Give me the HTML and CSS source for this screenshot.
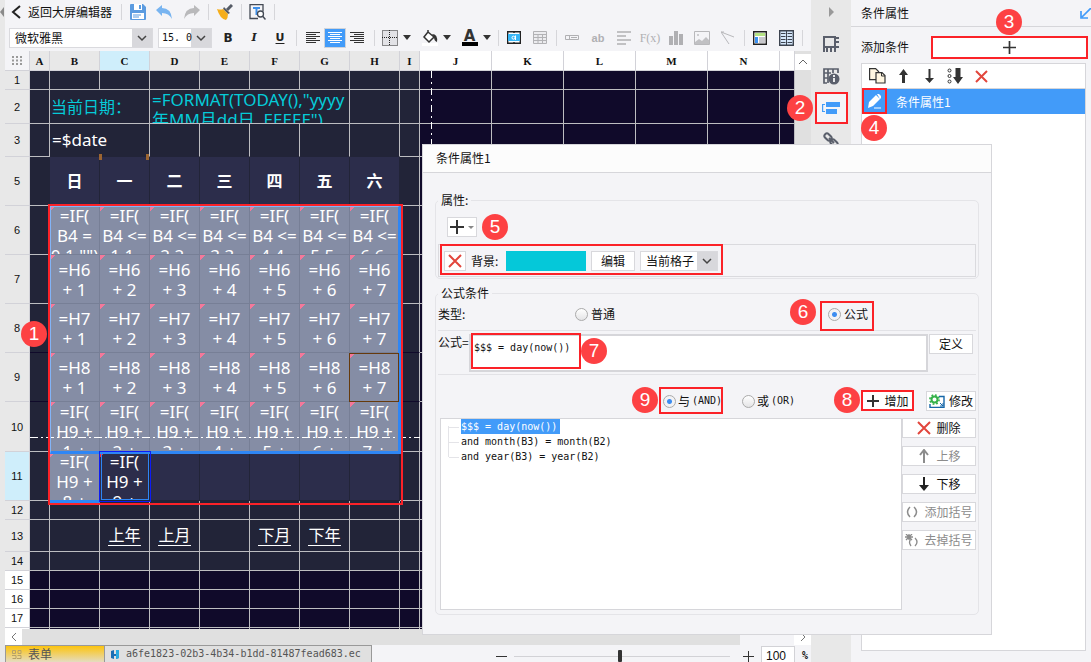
FILE: index.html
```html
<!DOCTYPE html>
<html lang="zh-CN">
<head>
<meta charset="utf-8">
<title>条件属性</title>
<link rel="stylesheet" href="styles.css">
</head>
<body>
<div class="app">
  <div class="edge"><svg class="edge-arrow" width="4" height="10" viewBox="0 0 4 10"><path d="M4 0v10L0 5z" fill="#8a8a8a"/></svg></div>
  <main class="main">
    <div class="bar bar-top">
      <button class="back"><svg width="10" height="14" viewBox="0 0 10 14"><path d="M9 1 2 7l7 6" fill="none" stroke="#222" stroke-width="2"/></svg>返回大屏编辑器</button>
      <i class="sep"></i>
      <div class="group wide">
        <button aria-label="保存"><svg width="16" height="16" viewBox="0 0 16 16"><path d="M0 1q0-1 1-1h12l3 3v12q0 1-1 1H1q-1 0-1-1z" fill="#5b9be0"/><path d="M4 0h8v6H4z" fill="#fff"/><path d="M9 1h2v4H9z" fill="#5b9be0"/><path d="M2 9h12v6H2z" fill="#fff"/><path d="M3 11h8M3 13h6" stroke="#5b9be0"/></svg></button>
        <button aria-label="撤销"><svg width="17" height="15" viewBox="0 0 17 15"><path d="M0 5 6 0v3q9 0 10 11-3-6-10-6v3z" fill="#78b4f0"/></svg></button>
        <button aria-label="重做"><svg width="17" height="15" viewBox="0 0 17 15"><path d="M17 5 11 0v3Q2 3 1 14q3-6 10-6v3z" fill="#b9b9bb"/></svg></button>
      </div>
      <i class="sep"></i>
      <div class="group wide"><button aria-label="格式刷"><svg width="16" height="16" viewBox="0 0 16 16"><path d="m15 1-5 5" stroke="#555b66" stroke-width="3"/><path d="m7 3 6 6-2 1-5-5z" fill="#555b66"/><path d="M0 5q4 1 6 0l5 5q0 4-2 6-6-1-9-11z" fill="#f5ae1c"/></svg></button></div>
      <i class="sep"></i>
      <div class="group wide"><button aria-label="预览"><svg width="17" height="16" viewBox="0 0 17 16"><path d="M9 14.500H1V.5h13v7" fill="none" stroke="#444a55" stroke-width="1.300"/><path d="M4 4h7M7.500 4v7" stroke="#3f8fe8" stroke-width="2"/><circle cx="11.500" cy="10" r="3" fill="#fff" stroke="#444a55" stroke-width="1.300"/><path d="m13.500 12 3 3.500" stroke="#444a55" stroke-width="1.500"/></svg></button></div>
      <i class="sep"></i>
    </div>
    <div class="bar bar-format">
      <select class="combo combo-font" aria-label="字体"><option>微软雅黑</option></select>
      <select class="combo combo-size mono" aria-label="字号"><option>15. 0</option></select>
      <div class="group"><button class="letter"><b>B</b></button><button class="letter"><em>I</em></button><button class="letter"><u>U</u></button></div>
      <i class="sep"></i>
      <div class="group aligns">
        <button aria-label="左对齐"><svg width="14" height="12" viewBox="0 0 14 12"><path d="M0 .5h14M0 2.500h10M0 4.500h14M0 6.500h10M0 8.500h14M0 10.500h10" stroke="#333"/></svg></button>
        <button class="active" aria-label="居中"><svg width="14" height="12" viewBox="0 0 14 12"><path d="M0 .5h14M2 2.500h10M0 4.500h14M2 6.500h10M0 8.500h14M2 10.500h10" stroke="#fff"/></svg></button>
        <button aria-label="右对齐"><svg width="14" height="12" viewBox="0 0 14 12"><path d="M0 .5h14M4 2.500h10M0 4.500h14M4 6.500h10M0 8.500h14M4 10.500h10" stroke="#333"/></svg></button>
      </div>
      <i class="sep"></i>
      <div class="drops">
        <button aria-label="边框"><svg width="16" height="16" viewBox="0 0 16 16"><path d="M.5.5h15v15H.5z" fill="#e2e2e6" stroke="#222" stroke-dasharray="1 1"/><path d="M0 7.500h16M7.500 0v16" stroke="#222" stroke-dasharray="1 1"/></svg><i class="caret"></i></button>
        <button aria-label="填充"><svg width="16" height="16" viewBox="0 0 16 16"><path d="M0 13h16v3H0z" fill="#fff"/><path d="m6 2 6 5-5 5-5-5 4-5V0" fill="#fff" stroke="#333" stroke-width="1.500"/><path d="M10 4q6 0 5 8-3-1-3-5z" fill="#333"/></svg><i class="caret"></i></button>
        <button aria-label="文字颜色"><span class="font-color">A</span><i class="caret"></i></button>
      </div>
      <i class="sep"></i>
      <div class="group">
        <button aria-label="合并"><svg width="14" height="13" viewBox="0 0 14 13"><path d="M.7.7h12.600v11.600H.7zM7 0v2M7 11v2" fill="#fff" stroke="#222" stroke-width="1.400"/><path d="M1 3h12v7H1z" fill="#38b6f5"/><circle cx="6.500" cy="6.700" r="1.500" fill="none" stroke="#fff"/><path d="M8.500 4.500V9" stroke="#fff"/></svg></button>
        <button aria-label="表格"><svg width="14" height="13" viewBox="0 0 14 13"><path d="M.5.500h13v12H.5zM0 3.500h14M0 6.500h14M0 9.500h14M5 3v10M9.500 3v10" fill="#ececef" stroke="#b2b2b5"/></svg></button>
      </div>
      <i class="sep"></i>
      <div class="group">
        <button aria-label="文本框"><svg width="14" height="5" viewBox="0 0 14 5"><path d="M.5.500h13v4H.5zM4.500 0v5M6 2.500h6" fill="none" stroke="#b0b0b3"/></svg></button>
        <button class="faint">ab</button>
        <button aria-label="富文本"><svg width="14" height="14" viewBox="0 0 14 14"><path d="M0 1h14M0 5h9M0 9h14M0 13h9" stroke="#b0b0b3" stroke-width="1.600"/></svg></button>
        <button class="faint serif">F(x)</button>
        <button aria-label="图表"><svg width="14" height="14" viewBox="0 0 14 14"><path d="M0 5h4v9H0zM5 0h4v14H5zM10 3h4v11h-4z" fill="#b0b0b3"/></svg></button>
        <button aria-label="图片"><svg width="16" height="14" viewBox="0 0 16 14"><path d="M.5.500h15v13H.5z" fill="none" stroke="#b8b8bb"/><path d="m1 11 4-3 3 2 4-4 3 3v4H1z" fill="#c0c0c3"/><circle cx="4" cy="4" r="1" fill="#c0c0c3"/></svg></button>
        <button aria-label="斜线"><svg width="14" height="14" viewBox="0 0 14 14"><path d="M0 1l13 5M0 1l8 12M0 1h3" fill="none" stroke="#b8b8bb"/></svg></button>
      </div>
      <i class="sep"></i>
      <div class="group">
        <button aria-label="布局"><svg width="14" height="14" viewBox="0 0 14 14"><path d="M.7.700h12.600v12.600H.7z" fill="#fff" stroke="#222" stroke-width="1.400"/><path d="M2 2h10v3H2z" fill="#b5e384"/><path d="M2 6h3v6H2z" fill="#3c92f2"/><path d="M6 6h6v6H6z" fill="#c8c8cc"/></svg></button>
        <button aria-label="分栏"><svg width="15" height="16" viewBox="0 0 15 16"><path d="M.7.700h13.600v14.600H.7z" fill="#d4e6fa" stroke="#3c434f" stroke-width="1.400"/><path d="M2 3.500h4.500M2 6.500h4.500M2 9.500h4.500M2 12.500h4.500M8.500 3.500H13M8.500 6.500H13M8.500 9.500H13M8.500 12.500H13M7.500 1v14" stroke="#3c434f"/></svg></button>
      </div>
      <i class="sep"></i>
    </div>

    <div class="work">
      <div class="sheet">
        <table class="grid">
          <colgroup><col class="c-head"><col class="c-thin"><col class="c-cell" span="7"><col class="c-thin"><col class="c-out" span="5"><col class="c-rest"></colgroup>
          <tr class="heads"><th class="corner"><svg width="11" height="9" viewBox="0 0 11 9"><path d="M1 0v9M5 0v9M9 0v9" stroke="#999" stroke-width="2" stroke-dasharray="2 1.500"/></svg></th><th>A</th><th>B</th><th class="hot">C</th><th>D</th><th>E</th><th>F</th><th>G</th><th>H</th><th>I</th><th class="blank">J</th><th class="blank">K</th><th class="blank">L</th><th class="blank">M</th><th class="blank">N</th><th class="blank"></th></tr>
          <tr class="r19"><th>1</th><td></td><td></td><td></td><td></td><td></td><td></td><td></td><td></td><td></td><td></td><td></td><td></td><td></td><td></td><td></td></tr>
          <tr class="r34"><th>2</th><td></td><td colspan="2" class="teal label">当前日期：</td><td colspan="4" class="teal top"><div class="clip">=FORMAT(TODAY(),"yyyy<br>年MM月dd日&nbsp; EEEEE")</div></td><td></td><td></td><td></td><td></td><td></td><td></td><td></td><td></td></tr>
          <tr class="r33"><th>3</th><td></td><td colspan="2" class="open">=$date</td><td class="open"></td><td class="open"></td><td class="open"></td><td class="open"></td><td class="open"></td><td></td><td></td><td></td><td></td><td></td><td></td><td></td></tr>
          <tr class="r49 band"><th>5</th><td></td><td>日</td><td>一</td><td>二</td><td>三</td><td>四</td><td>五</td><td>六</td><td></td><td colspan="6"></td></tr>
          <tr class="r49 picked over"><th>6</th><td></td><td><div class="cell">=IF(<br>B4 =<br>0,1,"")</div></td><td><div class="cell">=IF(<br>B4 &lt;=<br>1,1,</div></td><td><div class="cell">=IF(<br>B4 &lt;=<br>2,2,</div></td><td><div class="cell">=IF(<br>B4 &lt;=<br>3,3,</div></td><td><div class="cell">=IF(<br>B4 &lt;=<br>4,4,</div></td><td><div class="cell">=IF(<br>B4 &lt;=<br>5,5,</div></td><td><div class="cell">=IF(<br>B4 &lt;=<br>6,6,</div></td><td></td><td colspan="6"></td></tr>
          <tr class="r49 picked mid"><th>7</th><td></td><td><div class="cell">=H6<br>+ 1</div></td><td><div class="cell">=H6<br>+ 2</div></td><td><div class="cell">=H6<br>+ 3</div></td><td><div class="cell">=H6<br>+ 4</div></td><td><div class="cell">=H6<br>+ 5</div></td><td><div class="cell">=H6<br>+ 6</div></td><td><div class="cell">=H6<br>+ 7</div></td><td></td><td colspan="6"></td></tr>
          <tr class="r49 picked mid deep"><th>8</th><td></td><td><div class="cell">=H7<br>+ 1</div></td><td><div class="cell">=H7<br>+ 2</div></td><td><div class="cell">=H7<br>+ 3</div></td><td><div class="cell">=H7<br>+ 4</div></td><td><div class="cell">=H7<br>+ 5</div></td><td><div class="cell">=H7<br>+ 6</div></td><td><div class="cell">=H7<br>+ 7</div></td><td></td><td colspan="6"></td></tr>
          <tr class="r49 picked mid deep"><th>9</th><td></td><td><div class="cell">=H8<br>+ 1</div></td><td><div class="cell">=H8<br>+ 2</div></td><td><div class="cell">=H8<br>+ 3</div></td><td><div class="cell">=H8<br>+ 4</div></td><td><div class="cell">=H8<br>+ 5</div></td><td><div class="cell">=H8<br>+ 6</div></td><td><div class="cell">=H8<br>+ 7</div></td><td></td><td colspan="6"></td></tr>
          <tr class="r50 picked over"><th>10</th><td></td><td><div class="cell">=IF(<br>H9 +<br>1 +</div></td><td><div class="cell">=IF(<br>H9 +<br>2 +</div></td><td><div class="cell">=IF(<br>H9 +<br>3 +</div></td><td><div class="cell">=IF(<br>H9 +<br>4 +</div></td><td><div class="cell">=IF(<br>H9 +<br>5 +</div></td><td><div class="cell">=IF(<br>H9 +<br>6 +</div></td><td><div class="cell">=IF(<br>H9 +<br>7 +</div></td><td></td><td colspan="6"></td></tr>
          <tr class="r49 band"><th class="hot">11</th><td></td><td class="on"><div class="cell">=IF(<br>H9 +<br>8 +</div></td><td><div class="cell current">=IF(<br>H9 +<br>9 +</div></td><td></td><td></td><td></td><td></td><td></td><td></td><td colspan="6"></td></tr>
          <tr class="r19"><th>12</th><td></td><td></td><td></td><td></td><td></td><td></td><td></td><td></td><td></td><td colspan="6"></td></tr>
          <tr class="r32"><th>13</th><td></td><td></td><td><a href="#">上年</a></td><td><a href="#">上月</a></td><td></td><td><a href="#">下月</a></td><td><a href="#">下年</a></td><td></td><td></td><td colspan="6"></td></tr>
          <tr class="r19"><th>14</th><td></td><td></td><td></td><td></td><td></td><td></td><td></td><td></td><td></td><td colspan="6"></td></tr>
          <tr class="r19 outside"><th>15</th><td></td><td></td><td></td><td></td><td></td><td></td><td></td><td></td><td></td><td colspan="6"></td></tr>
          <tr class="r19 outside"><th>16</th><td></td><td></td><td></td><td></td><td></td><td></td><td></td><td></td><td></td><td colspan="6"></td></tr>
          <tr class="r19 outside"><th>17</th><td></td><td></td><td></td><td></td><td></td><td></td><td></td><td></td><td></td><td colspan="6"></td></tr>
          <tr class="r19 outside"><th></th><td></td><td></td><td></td><td></td><td></td><td></td><td></td><td></td><td></td><td colspan="6"></td></tr>
        </table>
        <i class="page-x"></i><i class="page-y"></i>
        <i class="tick tick-a"></i><i class="tick tick-b"></i>
        <i class="range"></i><i class="range-tail"></i><i class="cursor"></i><i class="parent-cell"></i>
        <i class="mark m1"></i><span class="badge b1">1</span>
      </div>
      <div class="vscroll"><button aria-label="向上"><svg width="10" height="6" viewBox="0 0 10 6"><path d="m1 5 4-4 4 4" fill="none" stroke="#666"/></svg></button></div>
    </div>
    <div class="hscroll">
      <button aria-label="向左"><svg width="6" height="10" viewBox="0 0 6 10"><path d="M5 1 1 5l4 4" fill="none" stroke="#777"/></svg></button>
      <i class="thumb"></i>
      <button aria-label="向右"><svg width="6" height="10" viewBox="0 0 6 10"><path d="m1 1 4 4-4 4" fill="none" stroke="#777"/></svg></button>
    </div>
    <div class="status">
      <button class="tab tab-form"><svg width="10" height="9" viewBox="0 0 10 9"><path d="M.5.500h3v3h-3zM6 .5h3v3H6zM0 5.500h4v3H.5M5.500 5.500H9v3H5" fill="none" stroke="#b5a16a"/></svg>表单</button>
      <button class="tab tab-block mono"><svg width="8" height="9" viewBox="0 0 8 9"><path d="M0 1l3-1v4h2V0h3v8L5 9V6H3v3L0 8z" fill="#1b6fb5"/><path d="M5 0h3v8L5 9z" fill="#28a9e0"/></svg>a6fe1823-02b3-4b34-b1dd-81487fead683.ec</button>
      <div class="zoom">
        <button aria-label="缩小"><svg width="11" height="11" viewBox="0 0 11 11"><path d="M0 5.500h11" stroke="#333"/></svg></button>
        <input type="range" min="0" max="100" value="49" aria-label="缩放">
        <button aria-label="放大"><svg width="11" height="11" viewBox="0 0 11 11"><path d="M0 5.500h11M5.500 0v11" stroke="#333"/></svg></button>
        <input class="pct" type="text" value="100" aria-label="缩放比例"><b class="mono">%</b>
      </div>
    </div>
  </main>

  <nav class="side">
    <button aria-label="收起"><svg width="5" height="10" viewBox="0 0 5 10"><path d="M0 0v10l5-5z" fill="#999"/></svg></button>
    <button aria-label="单元格元素"><svg width="17" height="17" viewBox="0 0 17 17"><path d="M1 16V1h11v10H1M12 2h4M12 6h4M12 11h4M4 11v5M8 11v5M12 11v5" fill="none" stroke="#5a5f6b" stroke-width="2"/></svg></button>
    <button aria-label="单元格属性"><svg width="17" height="17" viewBox="0 0 17 17"><path d="M4 15H1V1h14v4M1 5h7M1 10h4M5 1v14M10 1v4" fill="none" stroke="#5a5f6b" stroke-width="1.700"/><circle cx="11" cy="11" r="5.500" fill="#5a5f6b"/><path d="M11 7v2M11 10v4" stroke="#fff" stroke-width="1.700"/></svg></button>
    <button class="current-tool" aria-label="条件属性"><svg width="18" height="14" viewBox="0 0 18 14"><path d="M4 1h14v5H4zM4 8h11v5H4z" fill="#429bf9"/><path d="M3 3.500H.6v7H3" fill="none" stroke="#429bf9" stroke-width="1.200"/></svg></button>
    <button aria-label="超链接"><svg width="17" height="17" viewBox="0 0 17 17"><g fill="none" stroke="#5a5f6b" stroke-width="2"><rect x="-4" y="-2.500" width="8" height="5" rx="2.500" transform="translate(5 5) rotate(45)"/><rect x="-4" y="-2.500" width="8" height="5" rx="2.500" transform="translate(11 11) rotate(45)"/><path d="m6 6 5 5"/></g></svg></button>
    <span class="badge b2">2</span>
  </nav>

  <aside class="panel">
    <header class="panel-title">条件属性<svg width="11" height="11" viewBox="0 0 11 11"><path d="M11 0 2 9M1 3v7h7" fill="none" stroke="#429bf9" stroke-width="1.700"/></svg></header>
    <div class="add-row"><span>添加条件</span><button class="add" aria-label="添加条件"><svg width="13" height="13" viewBox="0 0 13 13"><path d="M0 6.500h13M6.500 0v13" stroke="#333" stroke-width="1.700"/></svg></button></div>
    <div class="cond-list">
      <div class="cond-tools">
        <button aria-label="复制"><svg width="17" height="16" viewBox="0 0 17 16"><path d="M.6.600h6l3 3v8h-9z" fill="#fff6e0" stroke="#333" stroke-width="1.200"/><path d="M7 4.600h6l3 3V15H7z" fill="#fff6e0" stroke="#333" stroke-width="1.200"/><path d="M12.500 5v3H16" fill="none" stroke="#333"/></svg></button>
        <button aria-label="上移"><svg width="11" height="15" viewBox="0 0 11 15"><path d="M5.500 0 1 6h3v8h3V6h3z" fill="#333"/></svg></button>
        <button aria-label="下移"><svg width="11" height="15" viewBox="0 0 11 15"><path d="M5.500 14 1 9h3.500V0h2v9H10z" fill="#333"/></svg></button>
        <button aria-label="置底"><svg width="16" height="16" viewBox="0 0 16 16"><circle cx="2.500" cy="2.500" r="1.500" fill="none" stroke="#333"/><circle cx="2.500" cy="8" r="1.500" fill="none" stroke="#333"/><circle cx="2.500" cy="13.500" r="1.500" fill="none" stroke="#333"/><path d="M8.500 0h5v9H16l-5 7-5-7h2.500z" fill="#333"/></svg></button>
        <button aria-label="删除"><svg width="13" height="13" viewBox="0 0 13 13"><path d="m1 1 11 11M12 1 1 12" stroke="#e2463c" stroke-width="2"/></svg></button>
      </div>
      <div class="cond-item"><button aria-label="编辑"><svg width="15" height="15" viewBox="0 0 15 15"><path d="m2 8 7-7 4 4-7 7-5 2zM10 0h2l2 2v2l-1 1z" fill="#fff"/><path d="M7 14h7" stroke="#fff"/></svg></button>条件属性1</div>
    </div>
    <i class="mark m3"></i><span class="badge b3">3</span>
    <i class="mark m4"></i><span class="badge b4">4</span>
  </aside>

  <section class="dialog" role="dialog" aria-label="条件属性1">
    <header class="dialog-title">条件属性1</header>
    <div class="dialog-body">
      <fieldset>
        <legend>属性:</legend>
        <button class="btn add-prop" aria-label="添加属性"><svg width="14" height="14" viewBox="0 0 14 14"><path d="M0 7h14M7 0v14" stroke="#333" stroke-width="2"/></svg><i class="caret small"></i></button>
        <div class="prop">
          <button class="btn icon-only" aria-label="删除属性"><svg width="14" height="14" viewBox="0 0 14 14"><path d="m1 1 12 12M13 1 1 13" stroke="#e2463c" stroke-width="2"/></svg></button>
          <span class="prop-name">背景:</span>
          <i class="swatch"></i>
          <button class="btn edit">编辑</button>
          <select class="combo combo-scope" aria-label="范围"><option>当前格子</option></select>
        </div>
      </fieldset>
      <fieldset class="second">
        <legend>公式条件</legend>
        <div class="kind"><span>类型:</span><label><input type="radio" name="kind">普通</label><label><input type="radio" name="kind" checked>公式</label></div>
        <div class="formula"><label for="fx">公式=</label><textarea id="fx" class="mono" spellcheck="false">$$$ = day(now())</textarea><button class="btn define">定义</button></div>
        <div class="joins"><label><input type="radio" name="join" checked>与<span class="mono">(AND)</span></label><label><input type="radio" name="join">或<span class="mono">(OR)</span></label>
          <button class="btn insert"><svg width="12" height="12" viewBox="0 0 12 12"><path d="M0 6h12M6 0v12" stroke="#333" stroke-width="2"/></svg>增加</button>
          <button class="btn modify"><svg width="16" height="14" viewBox="0 0 16 14"><path d="M10 2.500h5v11H1V10" fill="none" stroke="#1767a8" stroke-width="1.400"/><path d="m11 9 3 3M11 12h3V9" stroke="#1767a8" fill="none"/><circle cx="5.500" cy="5.500" r="3" fill="none" stroke="#35b24a" stroke-width="2"/><circle cx="5.500" cy="5.500" r="4.600" fill="none" stroke="#35b24a" stroke-width="1.600" stroke-dasharray="1.800 1.800"/></svg>修改</button></div>
        <div class="lists">
          <ul class="tree mono"><li class="chosen"><span>$$$ = day(now())</span></li><li><span>and month(B3) = month(B2)</span></li><li><span>and year(B3) = year(B2)</span></li></ul>
          <div class="ops">
            <button class="btn"><svg width="14" height="14" viewBox="0 0 14 14"><path d="m1 1 12 12M13 1 1 13" stroke="#e2463c" stroke-width="2"/></svg>删除</button>
            <button class="btn" disabled><svg width="14" height="14" viewBox="0 0 14 14"><path d="M7 14V2M3 6l4-5 4 5" fill="none" stroke="#8c8c8c" stroke-width="2"/></svg>上移</button>
            <button class="btn"><svg width="14" height="14" viewBox="0 0 14 14"><path d="M7 0v12" stroke="#222" stroke-width="2"/><path d="M2 8h10l-5 6z" fill="#222"/></svg>下移</button>
            <button class="btn" disabled><svg width="14" height="12" viewBox="0 0 14 12"><path d="M5 1Q0 6 5 11M9 1q5 5 0 10" fill="none" stroke="#8c8c8c" stroke-width="1.500"/></svg>添加括号</button>
            <button class="btn" disabled><svg width="14" height="13" viewBox="0 0 14 13"><path d="M6 5Q3 8 6 12M10 4q4 4 0 8M0 3h8M4 0v6M1 0l6 6M7 0 1 6" fill="none" stroke="#8c8c8c" stroke-width="1.300"/></svg>去掉括号</button>
          </div>
        </div>
      </fieldset>
    </div>
    <i class="mark m5"></i><span class="badge b5">5</span>
    <i class="mark m6"></i><span class="badge b6">6</span>
    <i class="mark m7"></i><span class="badge b7">7</span>
    <i class="mark m8"></i><span class="badge b8">8</span>
    <i class="mark m9"></i><span class="badge b9">9</span>
  </section>
</div>
</body>
</html>
```

FILE: styles.css
```css
* { box-sizing: border-box; }
body { margin: 0; font: 12px/16px "Noto Sans CJK SC", sans-serif; color: #111; background: #f4f4f7; }
button, input, select, textarea { font: inherit; color: inherit; margin: 0; padding: 0; border: 0; background: none; border-radius: 0; outline: 0; }
button { display: inline-flex; align-items: center; justify-content: center; white-space: nowrap; }
svg { display: block; flex: none; }
.mono { font-family: "DejaVu Sans Mono", "Noto Sans CJK SC", monospace; font-size: 10px; }

.app { position: relative; display: flex; height: 100vh; overflow: hidden; }
.edge { flex: none; width: 5px; padding-top: 7px; background: #e8e8e8; }
.main { flex: 1; min-width: 0; display: flex; flex-direction: column; }

/* Toolbars */
.bar { flex: none; display: flex; align-items: center; }
.bar-top { height: 24px; padding-left: 6px; }
.bar-format { height: 27px; padding-left: 4px; }
.back { gap: 7px; padding-right: 7px; }
.sep { flex: none; width: 4px; height: 16px; background: linear-gradient(#d6d6da, #d6d6da) center / 1px 100% no-repeat; }
.group { display: flex; padding: 0 1px; }
.group button { width: 26px; height: 20px; }
.group.wide button { width: 27px; }
.group.aligns { padding: 0 4px; }
.group.aligns button { width: 22px; }
.group .active { background: #429bf9; border: 1px solid #cfd3da; }
.letter { font-family: "DejaVu Sans", sans-serif; font-size: 12px; color: #222; }
.letter em { font-family: "DejaVu Serif", serif; font-weight: bold; font-size: 11px; }
.letter u { font-weight: bold; font-size: 11px; text-underline-offset: 2px; }
.group .faint { color: #b0b0b3; font: bold 11px/14px "Liberation Sans", sans-serif; }
.group .serif { font: 12px/14px "Liberation Serif", serif; }
.drops { display: flex; }
.drops button { width: 40px; height: 20px; gap: 5px; }
.caret { width: 0; height: 0; border: 4px solid transparent; border-top: 5px solid #333; border-bottom: 0; }
.caret.small { border-width: 3px 3px 0; border-top-color: #888; }
.font-color { width: 16px; height: 16px; font: bold 15px/12px "DejaVu Sans", sans-serif; color: #333; border-bottom: 4px solid #000; }
.combo { height: 20px; border: 1px solid #dadade; appearance: none; padding: 0 5px; color: #111;
  background: url("data:image/svg+xml,%3Csvg xmlns='http://www.w3.org/2000/svg' width='20' height='20'%3E%3Cpath d='M0 0h20v20H0z' fill='%23d8d8dc'/%3E%3Cpath d='m6 8 4 4 4-4' fill='none' stroke='%23444' stroke-width='1.500'/%3E%3C/svg%3E") right center no-repeat #fff; }
.combo-font { width: 144px; margin-right: 5px; }
.combo-size { width: 54px; margin-right: 2px; padding: 0 0 0 3px; }
.combo-scope { width: 78px; }

/* Sheet */
.work { flex: 1; min-height: 0; display: flex; }
.sheet { position: relative; flex: 1; min-width: 0; overflow: hidden; background: #100a2a; }
.grid { width: 100%; table-layout: fixed; border-collapse: separate; border-spacing: 0; color: #fff; font: 17px/20px "Noto Sans", "Noto Sans CJK SC", sans-serif; }
.c-head { width: 25px; }
.c-thin { width: 20px; background: #222438; }
.c-cell { width: 50px; background: #222438; }
.c-out { width: 72px; background: #100a2a; }
.c-rest { background: #100a2a; }
.grid th { padding: 0; background: #e8e8e8; color: #111; font: 11px/14px "Liberation Sans", sans-serif; border-right: 1px solid #d2d2d8; border-bottom: 1px solid #d2d2d8; }
.grid .heads th { height: 20px; font: bold 11px/14px "Liberation Serif", serif; }
.grid .hot { background: #cfeefb; }
.grid .blank, .grid .outside th { background: #fff; }
.grid .corner { background: #f4f4f7; }
.corner svg { margin: 0 auto; }
.grid td { padding: 0; border-right: 1px solid #bdbdc1; border-bottom: 1px solid #bdbdc1; overflow: hidden; }
.r19 { height: 19px; }
.r32 { height: 32px; }
.r33 { height: 33px; }
.r34 { height: 34px; }
.r49 { height: 49px; }
.r50 { height: 50px; }
.outside { background: #100a2a; }
.grid .teal { color: #05cbd8; padding-left: 2px; white-space: nowrap; }
.grid .label { font-size: 16px; padding-left: 1px; }
.grid .top, .over td { vertical-align: top; }
.clip { height: 33px; overflow: hidden; }
.grid .open { border-bottom-color: #222438; padding-left: 2px; }
.band td, .picked td { text-align: center; }
.band td { font-size: 16px; }
.band td:nth-child(n+3):nth-child(-n+9) { background: #2c2d4b; border-color: #222438; font-weight: bold; }
.band td:nth-child(2), .picked td:nth-child(2) { border-right-color: #222438; }
.picked td:nth-child(n+3):nth-child(-n+9), .grid .band .on.on.on { background: #858da5; border-color: #777f96; font-weight: normal; }
.grid .deep td:nth-child(2), .grid .deep td:nth-child(10) { border-bottom-color: #100a2a; }
.cell { height: 48px; overflow: hidden; color: #fff; font-size: 17px; font-weight: normal; background: linear-gradient(135deg, #f4789a 4px, transparent 4px) no-repeat; }
.cell.current { background-image: linear-gradient(135deg, #ff2030 4px, transparent 4px); }
.mid .cell { padding-top: 5px; }
.r32 td { text-align: center; }
.r32 a { display: inline-block; height: 21px; color: #fff; font-size: 16px; text-decoration: none; border-bottom: 1px solid #fff; vertical-align: middle; }

.sheet > i { position: absolute; }
.page-x { left: 426px; top: 20px; bottom: 0; width: 1px; background: repeating-linear-gradient(#fff 0 7px, transparent 7px 11px, #fff 11px 13px, transparent 13px 17px); }
.page-y { left: 25px; top: 386px; width: 390px; height: 1px; background: repeating-linear-gradient(90deg, #fff 0 8px, transparent 8px 11px, #fff 11px 13px, transparent 13px 16px); }
.tick { top: 103px; width: 3px; height: 6px; background: #9c6531; }
.tick-a { left: 94px; }
.tick-b { left: 141px; }
.range { left: 45px; top: 154px; width: 351px; height: 249px; border: solid #2e86f5; border-width: 2px 3px 3px 1px; border-top-color: #82b4f7; border-left-color: #82b4f7; }
.range-tail { left: 45px; top: 449px; width: 50px; height: 3px; background: #2e86f5; }
.cursor { left: 94px; top: 400px; width: 52px; height: 51px; border: 1px solid #0d1cf5; outline: 1px solid #2e86f5; outline-offset: -3px; }
.parent-cell { left: 344px; top: 302px; width: 50px; height: 49px; border: 1px solid #663a0c; }

.vscroll { flex: none; width: 16px; padding-top: 1px; background: #e0e0e0; }
.vscroll button { width: 16px; height: 16px; background: #fff; }
.hscroll { flex: none; display: flex; height: 16px; background: #f4f4f7; }
.hscroll button { width: 17px; background: #fff; }
.hscroll .thumb { flex: 1; margin-right: 54px; background: #e0e0e0; }
.status { flex: none; display: flex; height: 17px; }
.tab { gap: 6px; justify-content: flex-start; height: 17px; border: 1px solid #999; border-bottom: 0; color: #555; padding-left: 6px; }
.tab-form { width: 100px; background: linear-gradient(#fcc40e, #e4dcc0); }
.tab-block { width: 267px; gap: 7px; border-left: 0; background: #e0e0e0; }
.zoom { flex: 1; display: flex; align-items: center; justify-content: flex-end; height: 22px; gap: 7px; padding-right: 3px; }
.zoom input[type="range"] { appearance: none; width: 216px; height: 12px; margin-right: 6px; background: linear-gradient(#d2d2d6, #d2d2d6) center / 100% 1px no-repeat; }
.zoom input[type="range"]::-webkit-slider-thumb { appearance: none; width: 4px; height: 12px; border-radius: 1px; background: #333; }
.zoom .pct { width: 34px; height: 20px; padding-left: 4px; border: 1px solid #d2d2d6; background: #fff; font: 12px/18px "Liberation Sans", sans-serif; }

/* Tool strip */
.side { position: relative; z-index: 2; flex: none; width: 40px; display: flex; flex-direction: column; align-items: center; background: #e8e8e8; }
.side button { flex: none; width: 33px; height: 32px; }
.side button:first-of-type { height: 24px; margin-bottom: 4px; }
.side .current-tool { background: #f4f4f7; border: 2px solid #fb2228; }

/* Right panel */
.panel { position: relative; flex: none; width: 240px; display: flex; flex-direction: column; padding-bottom: 11px; background: #f4f4f7; }
.panel-title { display: flex; align-items: center; justify-content: space-between; height: 27px; padding-left: 10px; border-bottom: 1px solid #d6d6da; }
.add-row { display: flex; align-items: center; justify-content: space-between; height: 36px; padding: 4px 5px 0 10px; }
.add { width: 154px; height: 20px; background: #fff; }
.cond-list { flex: 1; margin: 0 5px 0 10px; border: 1px solid #d6d6da; background: #fff; }
.cond-tools { display: flex; align-items: center; height: 25px; padding-left: 2px; border-bottom: 1px solid #d6d6da; }
.cond-tools button { width: 26px; height: 22px; }
.cond-item { display: flex; align-items: center; gap: 10px; height: 25px; color: #fff; background: #429bf9; }
.cond-item button { width: 24px; height: 25px; }

/* Dialog window */
.dialog { position: absolute; z-index: 3; left: 422px; top: 144px; width: 570px; background: #f4f4f7; border: 1px solid #d6d6da; }
.dialog-title { height: 28px; padding: 5px 13px; background: #fcfcfc; border-bottom: 1px solid #d6d6da; }
.dialog-body { padding: 19px 12px; }
fieldset { min-width: 0; margin: 0; padding: 9px 2px 1px; border: 1px solid #e4e4e8; border-radius: 5px; }
legend { padding: 0 3px; line-height: 16px; }
fieldset.second { margin-top: 6px; padding: 0 2px 4px; }
.btn { height: 20px; gap: 5px; background: #fff; border: 1px solid #d8d8dc; }
.btn:disabled { color: #8c8c8c; }
.add-prop { display: flex; gap: 4px; width: 30px; margin-left: 9px; }
.prop { display: flex; align-items: center; height: 33px; margin-top: 7px; padding-left: 5px; border: 1px solid #dadade; }
.icon-only { width: 22px; margin-right: 5px; }
.prop-name { width: 35px; }
.swatch { width: 80px; height: 20px; margin-right: 5px; background: #05c8d9; }
.edit { width: 44px; margin-right: 5px; }
label { display: inline-flex; align-items: center; gap: 3px; white-space: nowrap; }
input[type="radio"] { appearance: none; width: 13px; height: 13px; border: 1px solid #aaa; border-radius: 50%; background: linear-gradient(#fff, #e4e4e6); }
input[type="radio"]:checked { background: radial-gradient(circle, #3c8cf0 2px, #f2f2f4 3px); }
.kind { display: grid; grid-template-columns: 137px 253px auto; align-items: center; height: 30px; padding-bottom: 3px; border-bottom: 1px solid #e2e2e6; }
.formula { display: flex; align-items: flex-start; height: 44px; padding-top: 3px; border-bottom: 1px solid #e2e2e6; }
.formula label { width: 31px; }
.formula textarea { flex: 1; height: 38px; padding: 4px 3px; border: 2px solid #d6d6da; background: #fff; resize: none; line-height: 16px; overflow: hidden; }
.define { width: 44px; margin: 0 3px 0 1px; }
.joins { display: flex; align-items: center; height: 43px; padding-top: 9px; padding-left: 225px; }
.joins label { width: 79px; gap: 2px; }
.insert { width: 52px; margin-left: auto; }
.modify { width: 50px; margin-left: 12px; gap: 4px; }
.lists { display: flex; padding-left: 2px; }
.tree { flex: 1; height: 192px; margin: 0; padding: 0 0 0 7px; list-style: none; background: #fff; border: 1px solid #d6d6da; line-height: 15px; }
.tree li { display: flex; height: 15px; white-space: pre; border-left: 1px solid #e4e4e8; }
.tree li::before { content: ""; width: 10px; height: 8px; margin-right: 2px; border-bottom: 1px solid #e4e4e8; }
.tree li:last-child { border-image: linear-gradient(#e4e4e8 8px, transparent 8px) 1; }
.tree li:first-child { border-image: linear-gradient(transparent 7px, #e4e4e8 7px) 1; }
.tree .chosen span { padding-right: 3px; color: #fff; background: #429bf9; }
.ops { display: flex; flex-direction: column; gap: 8px; width: 74px; }

/* Step annotations */
.mark { position: absolute; z-index: 2; border: 2px solid #fb2228; }
.badge { position: absolute; z-index: 3; width: 26px; height: 26px; border-radius: 50%; background: #fd4143; color: #fff; text-align: center; font: 19px/26px "Liberation Sans", sans-serif; }
.m1 { left: 43px; top: 153px; width: 355px; height: 301px; }
.b1 { left: 16px; top: 270px; }
.b2 { left: -24px; top: 95px; }
.m3 { left: 80px; top: 36px; width: 157px; height: 23px; }
.b3 { left: 145px; top: 9px; }
.m4 { left: 11px; top: 88px; width: 25px; height: 26px; }
.b4 { left: 10px; top: 115px; }
.m5 { left: 17px; top: 99px; width: 283px; height: 31px; }
.b5 { left: 59px; top: 69px; }
.m6 { left: 397px; top: 156px; width: 54px; height: 30px; }
.b6 { left: 367px; top: 154px; }
.m7 { left: 48px; top: 188px; width: 110px; height: 36px; }
.b7 { left: 158px; top: 193px; }
.m8 { left: 438px; top: 245px; width: 53px; height: 21px; }
.b8 { left: 411px; top: 242px; }
.m9 { left: 236px; top: 242px; width: 64px; height: 27px; }
.b9 { left: 209px; top: 242px; }
```
